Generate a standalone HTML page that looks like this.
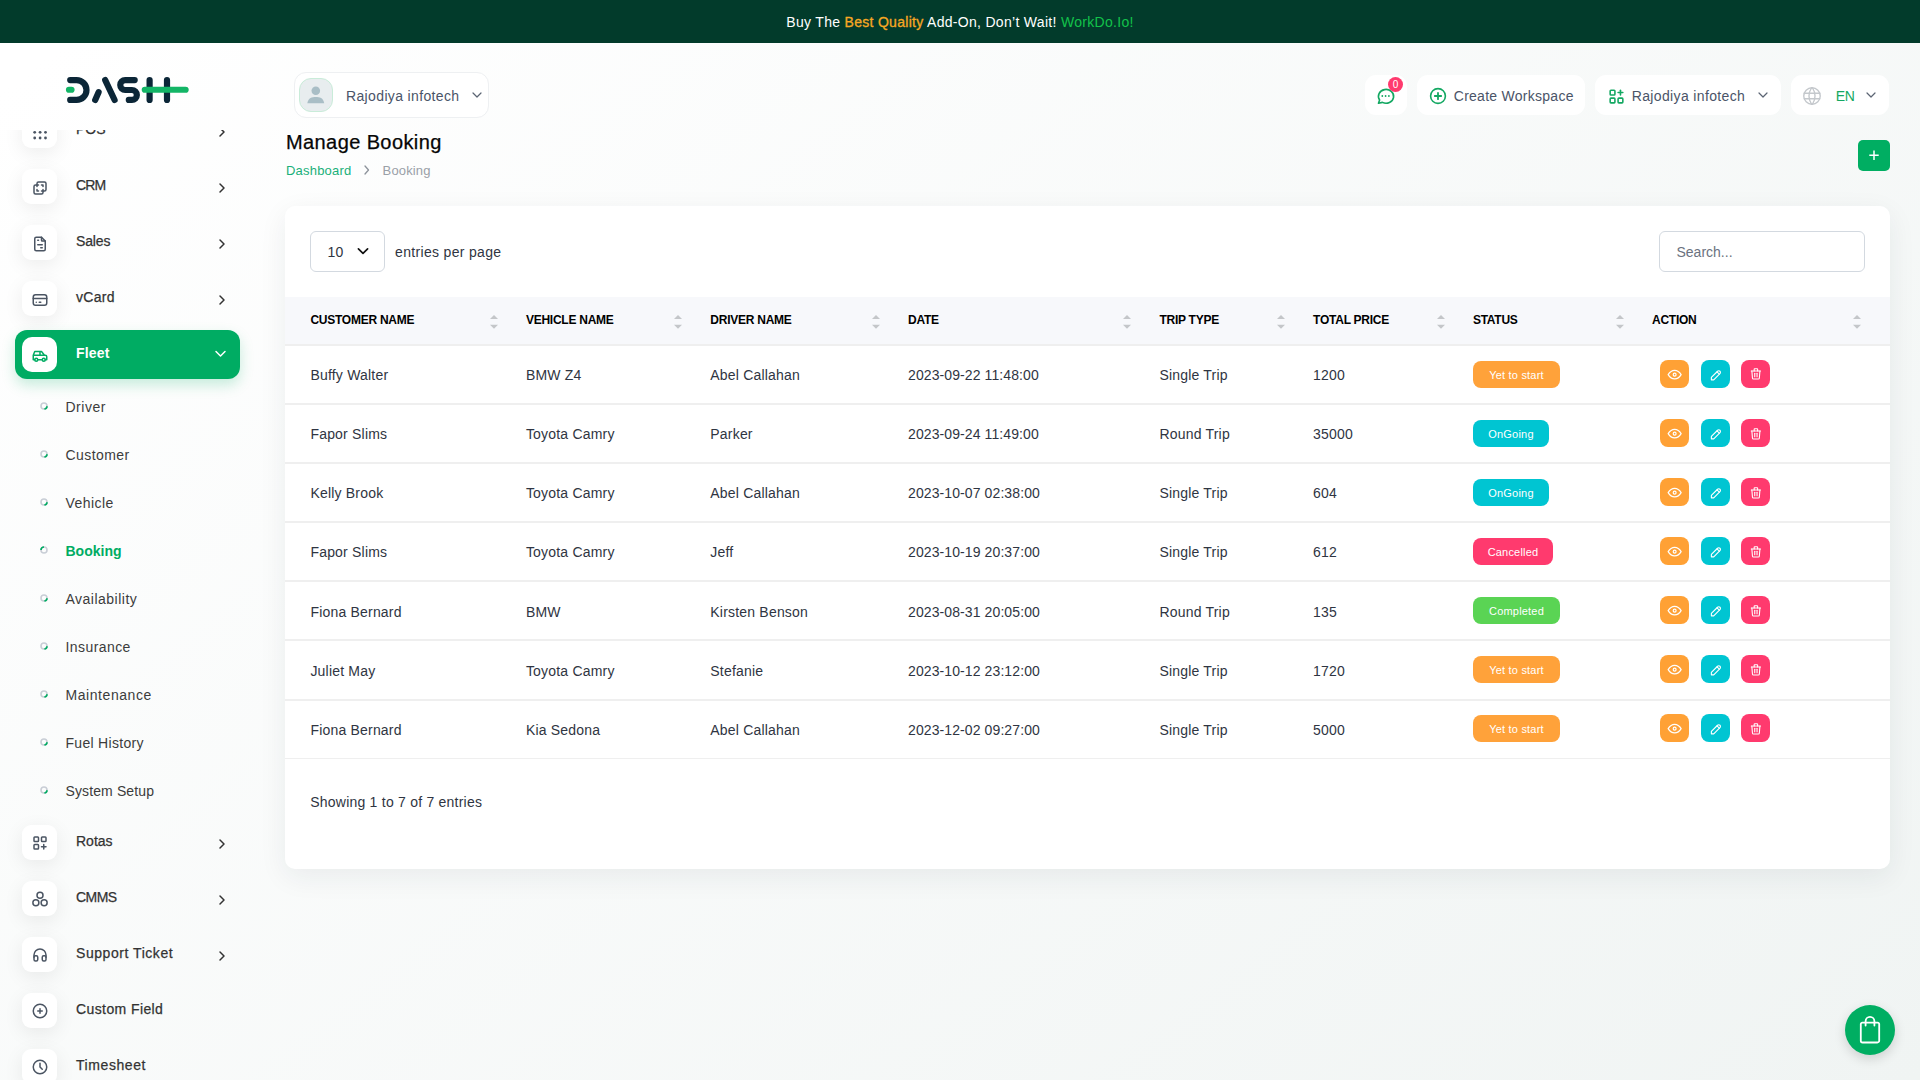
<!DOCTYPE html>
<html><head><meta charset="utf-8">
<style>
*{box-sizing:border-box;margin:0;padding:0}
html,body{width:1920px;height:1080px;overflow:hidden}
body{font-family:"Liberation Sans",sans-serif;position:relative;background:#fff linear-gradient(141.55deg,rgba(240,244,243,0) 3.46%,#f0f4f3 99.86%);color:#333}
.a{position:absolute;line-height:1;white-space:nowrap}
.ib{position:absolute;left:22px;width:35px;height:35px;border-radius:9px;background:#fff;box-shadow:0 5px 20px rgba(0,0,0,0.075)}
.ib svg{position:absolute;left:8.5px;top:9.5px}
.lbl{position:absolute;left:76px;font-size:14px;color:#333;-webkit-text-stroke:0.25px #333;line-height:1;white-space:nowrap}
.chev{position:absolute;left:217px}
.sub{position:absolute;left:65.5px;font-size:14px;color:#3c3c3c;letter-spacing:0.45px;line-height:1;white-space:nowrap}
.bul{position:absolute;left:40px;width:8px;height:8px}
.hbox{position:absolute;top:75px;height:40px;background:#fff;border-radius:11px}
.card{position:absolute;left:285px;top:206px;width:1605px;height:663px;background:#fff;border-radius:10px;box-shadow:0 8px 28px rgba(30,40,50,0.07)}
.th{position:absolute;top:313.8px;font-size:12px;font-weight:bold;color:#000;letter-spacing:-0.25px;line-height:1;white-space:nowrap}
.sort{position:absolute;top:315px}
.td{position:absolute;font-size:14px;color:#2f3542;letter-spacing:0.2px;line-height:1;white-space:nowrap}
.badge{position:absolute;left:1473px;height:27px;border-radius:8px;color:#fff;font-size:11px;letter-spacing:0.2px;line-height:28px;text-align:center;white-space:nowrap}
.btn{position:absolute;width:29px;height:28px;border-radius:8px}

.hr{position:absolute;left:285px;width:1605px;height:1.5px;background:#eceef1}
</style></head><body>
<div style="position:absolute;left:0;top:0;width:1920px;height:43px;background:#023b2b"></div>
<div class="a" style="left:0px;top:14.85px;font-size:14px;width:1920px;text-align:center;color:#fff;letter-spacing:0.3px">Buy The <span style="color:#f7a823;-webkit-text-stroke:0.3px #f7a823">Best Quality</span> Add-On, Don’t Wait! <span style="color:#13c24a">WorkDo.Io!</span></div>
<svg class="a" style="left:0;top:0" width="260" height="130" viewBox="0 0 260 130">
 <g fill="none" stroke-linecap="round" stroke-width="6.2">
  <path d="M69 89.75 H71.5" stroke="#13b566"/>
  <path d="M70.2 80.1 H76.6 A9.9 9.9 0 0 1 76.6 99.9 H70.2" stroke="#0b2637"/>
  <path d="M95.2 100 L98.6 92.2" stroke="#0b2637"/>
  <path d="M105.2 80.1 L114.6 100" stroke="#0b2637"/>
  <path d="M134.7 80.1 H125.2 A4.95 4.95 0 0 0 125.2 90 H131.9 A4.95 4.95 0 0 1 131.9 99.9 H128.8" stroke="#0b2637"/>
  <path d="M149.6 80.1 V99.9 M167 80.1 V99.9" stroke="#0b2637"/>
  <path d="M144.8 89.75 H185.6" stroke="#13b566"/>
 </g>
</svg>
<div style="position:absolute;left:0;top:130px;width:260px;height:950px;overflow:hidden"><div style="position:absolute;left:0;top:-130px;width:260px;height:1080px">
<div class="ib" style="top:113.2px"><svg width="18" height="18" viewBox="0 0 18 18" fill="#4b5563"><circle cx="3.7" cy="3.8" r="1.4"/><circle cx="9.1" cy="3.8" r="1.4"/><circle cx="14.5" cy="3.8" r="1.4"/><circle cx="3.7" cy="9.3" r="1.4"/><circle cx="9.1" cy="9.3" r="1.4"/><circle cx="14.5" cy="9.3" r="1.4"/><circle cx="3.7" cy="15" r="1.4"/><circle cx="9.1" cy="15" r="1.4"/><circle cx="14.5" cy="15" r="1.4"/></svg></div>
<div class="lbl" style="top:121.95px;letter-spacing:0px">POS</div>
<svg class="chev" style="top:125.9px" width="10" height="12" viewBox="0 0 10 12"><path d="M3 2 L7 6 L3 10" fill="none" stroke="#333" stroke-width="1.5" stroke-linecap="round" stroke-linejoin="round"/></svg>
<div class="ib" style="top:169.1px"><svg width="18" height="18" viewBox="0 0 24 24" fill="none" stroke="#4b5563" stroke-width="2" stroke-linecap="round" stroke-linejoin="round"><path d="M16 16v2a2 2 0 0 1 -2 2h-8a2 2 0 0 1 -2 -2v-8a2 2 0 0 1 2 -2h2v-2a2 2 0 0 1 2 -2h8a2 2 0 0 1 2 2v8a2 2 0 0 1 -2 2h-2"/><path d="M10 8l-2 0l0 2"/><path d="M8 14l0 2l2 0"/><path d="M14 8l2 0l0 2"/><path d="M16 14l0 2l-2 0"/></svg></div>
<div class="lbl" style="top:177.85px;letter-spacing:-0.9px">CRM</div>
<svg class="chev" style="top:181.8px" width="10" height="12" viewBox="0 0 10 12"><path d="M3 2 L7 6 L3 10" fill="none" stroke="#333" stroke-width="1.5" stroke-linecap="round" stroke-linejoin="round"/></svg>
<div class="ib" style="top:225.1px"><svg width="18" height="18" viewBox="0 0 24 24" fill="none" stroke="#4b5563" stroke-width="2" stroke-linecap="round" stroke-linejoin="round"><path d="M14 3v4a1 1 0 0 0 1 1h4"/><path d="M17 21h-10a2 2 0 0 1 -2 -2v-14a2 2 0 0 1 2 -2h7l5 5v11a2 2 0 0 1 -2 2z"/><path d="M9 7l1 0"/><path d="M9 13l6 0"/><path d="M13 17l2 0"/></svg></div>
<div class="lbl" style="top:233.85px;letter-spacing:-0.15px">Sales</div>
<svg class="chev" style="top:237.8px" width="10" height="12" viewBox="0 0 10 12"><path d="M3 2 L7 6 L3 10" fill="none" stroke="#333" stroke-width="1.5" stroke-linecap="round" stroke-linejoin="round"/></svg>
<div class="ib" style="top:281.1px"><svg width="18" height="18" viewBox="0 0 24 24" fill="none" stroke="#4b5563" stroke-width="2" stroke-linecap="round" stroke-linejoin="round"><path d="M3 8a3 3 0 0 1 3 -3h12a3 3 0 0 1 3 3v8a3 3 0 0 1 -3 3h-12a3 3 0 0 1 -3 -3z"/><path d="M3 10l18 0"/><path d="M7 15l.01 0"/><path d="M11 15l2 0"/></svg></div>
<div class="lbl" style="top:289.85px;letter-spacing:0.27px">vCard</div>
<svg class="chev" style="top:293.8px" width="10" height="12" viewBox="0 0 10 12"><path d="M3 2 L7 6 L3 10" fill="none" stroke="#333" stroke-width="1.5" stroke-linecap="round" stroke-linejoin="round"/></svg>
<div style="position:absolute;left:15px;top:330px;width:225px;height:48.5px;border-radius:12px;background:#00ac63;box-shadow:0 6px 14px rgba(0,172,99,0.22)"></div>
<div style="position:absolute;left:22px;top:337px;width:35px;height:35px;border-radius:10px;background:#fff"><svg style="position:absolute;left:8.5px;top:9.7px" width="18" height="18" viewBox="0 0 24 24" fill="none" stroke="#00ac63" stroke-width="2" stroke-linecap="round" stroke-linejoin="round"><path d="M5 17a2 2 0 1 0 4 0a2 2 0 1 0 -4 0"/><path d="M15 17a2 2 0 1 0 4 0a2 2 0 1 0 -4 0"/><path d="M5 17h-2v-6l2 -5h9l4 5h1a2 2 0 0 1 2 2v4h-2m-4 0h-6m-6 -6h15m-6 0v-5"/></svg></div>
<div class="lbl" style="top:345.95px;color:#fff;font-weight:bold;-webkit-text-stroke:0;letter-spacing:0.2px">Fleet</div>
<svg class="a" style="left:214px;top:348px" width="13" height="12" viewBox="0 0 13 12"><path d="M2 3.5 L6.5 8 L11 3.5" fill="none" stroke="#fff" stroke-width="1.5" stroke-linecap="round" stroke-linejoin="round"/></svg>
<svg class="bul" style="top:402.3px" width="8" height="8" viewBox="0 0 8 8"><circle cx="4" cy="4" r="3" fill="none" stroke="#c9ced6" stroke-width="1.6"/><path d="M7 4.2 A3 3 0 0 1 4.4 7" fill="none" stroke="#00ac63" stroke-width="1.7"/></svg>
<div class="sub" style="top:399.95px;letter-spacing:0.5px">Driver</div>
<svg class="bul" style="top:450.3px" width="8" height="8" viewBox="0 0 8 8"><circle cx="4" cy="4" r="3" fill="none" stroke="#c9ced6" stroke-width="1.6"/><path d="M7 4.2 A3 3 0 0 1 4.4 7" fill="none" stroke="#00ac63" stroke-width="1.7"/></svg>
<div class="sub" style="top:447.95px;letter-spacing:0.44px">Customer</div>
<svg class="bul" style="top:498.3px" width="8" height="8" viewBox="0 0 8 8"><circle cx="4" cy="4" r="3" fill="none" stroke="#c9ced6" stroke-width="1.6"/><path d="M7 4.2 A3 3 0 0 1 4.4 7" fill="none" stroke="#00ac63" stroke-width="1.7"/></svg>
<div class="sub" style="top:495.95px;letter-spacing:0.45px">Vehicle</div>
<svg class="bul" style="top:546.3px" width="8" height="8" viewBox="0 0 8 8"><circle cx="4" cy="4" r="3" fill="none" stroke="#c9ced6" stroke-width="1.6"/><path d="M1 4 A3 3 0 0 1 4 1" fill="none" stroke="#00ac63" stroke-width="1.7"/></svg>
<div class="sub" style="top:543.95px;color:#00ac63;font-weight:bold;letter-spacing:0px">Booking</div>
<svg class="bul" style="top:594.3px" width="8" height="8" viewBox="0 0 8 8"><circle cx="4" cy="4" r="3" fill="none" stroke="#c9ced6" stroke-width="1.6"/><path d="M7 4.2 A3 3 0 0 1 4.4 7" fill="none" stroke="#00ac63" stroke-width="1.7"/></svg>
<div class="sub" style="top:591.95px;letter-spacing:0.49px">Availability</div>
<svg class="bul" style="top:642.3px" width="8" height="8" viewBox="0 0 8 8"><circle cx="4" cy="4" r="3" fill="none" stroke="#c9ced6" stroke-width="1.6"/><path d="M7 4.2 A3 3 0 0 1 4.4 7" fill="none" stroke="#00ac63" stroke-width="1.7"/></svg>
<div class="sub" style="top:639.95px;letter-spacing:0.42px">Insurance</div>
<svg class="bul" style="top:690.3px" width="8" height="8" viewBox="0 0 8 8"><circle cx="4" cy="4" r="3" fill="none" stroke="#c9ced6" stroke-width="1.6"/><path d="M7 4.2 A3 3 0 0 1 4.4 7" fill="none" stroke="#00ac63" stroke-width="1.7"/></svg>
<div class="sub" style="top:687.95px;letter-spacing:0.56px">Maintenance</div>
<svg class="bul" style="top:738.3px" width="8" height="8" viewBox="0 0 8 8"><circle cx="4" cy="4" r="3" fill="none" stroke="#c9ced6" stroke-width="1.6"/><path d="M7 4.2 A3 3 0 0 1 4.4 7" fill="none" stroke="#00ac63" stroke-width="1.7"/></svg>
<div class="sub" style="top:735.95px;letter-spacing:0.3px">Fuel History</div>
<svg class="bul" style="top:786.3px" width="8" height="8" viewBox="0 0 8 8"><circle cx="4" cy="4" r="3" fill="none" stroke="#c9ced6" stroke-width="1.6"/><path d="M7 4.2 A3 3 0 0 1 4.4 7" fill="none" stroke="#00ac63" stroke-width="1.7"/></svg>
<div class="sub" style="top:783.95px;letter-spacing:0.12px">System Setup</div>
<div class="ib" style="top:824.9px"><svg width="18" height="18" viewBox="0 0 24 24" fill="none" stroke="#4b5563" stroke-width="2" stroke-linecap="round" stroke-linejoin="round"><path d="M4 5a1 1 0 0 1 1 -1h4a1 1 0 0 1 1 1v4a1 1 0 0 1 -1 1h-4a1 1 0 0 1 -1 -1z"/><path d="M14 5a1 1 0 0 1 1 -1h4a1 1 0 0 1 1 1v4a1 1 0 0 1 -1 1h-4a1 1 0 0 1 -1 -1z"/><path d="M4 15a1 1 0 0 1 1 -1h4a1 1 0 0 1 1 1v4a1 1 0 0 1 -1 1h-4a1 1 0 0 1 -1 -1z"/><path d="M14 17h6m-3 -3v6"/></svg></div>
<div class="lbl" style="top:833.65px;letter-spacing:0.0px">Rotas</div>
<svg class="chev" style="top:837.6px" width="10" height="12" viewBox="0 0 10 12"><path d="M3 2 L7 6 L3 10" fill="none" stroke="#333" stroke-width="1.5" stroke-linecap="round" stroke-linejoin="round"/></svg>
<div class="ib" style="top:880.9px"><svg width="18" height="18" viewBox="0 0 24 24" fill="none" stroke="#4b5563" stroke-width="2" stroke-linecap="round" stroke-linejoin="round"><circle cx="12" cy="7" r="4"/><circle cx="6.5" cy="17" r="4"/><circle cx="17.5" cy="17" r="4"/></svg></div>
<div class="lbl" style="top:889.65px;letter-spacing:-0.52px">CMMS</div>
<svg class="chev" style="top:893.6px" width="10" height="12" viewBox="0 0 10 12"><path d="M3 2 L7 6 L3 10" fill="none" stroke="#333" stroke-width="1.5" stroke-linecap="round" stroke-linejoin="round"/></svg>
<div class="ib" style="top:936.9px"><svg width="18" height="18" viewBox="0 0 24 24" fill="none" stroke="#4b5563" stroke-width="2" stroke-linecap="round" stroke-linejoin="round"><path d="M4 15a2 2 0 0 1 2 -2h1a2 2 0 0 1 2 2v3a2 2 0 0 1 -2 2h-1a2 2 0 0 1 -2 -2z"/><path d="M15 15a2 2 0 0 1 2 -2h1a2 2 0 0 1 2 2v3a2 2 0 0 1 -2 2h-1a2 2 0 0 1 -2 -2z"/><path d="M4 15v-3a8 8 0 0 1 16 0v3"/></svg></div>
<div class="lbl" style="top:945.65px;letter-spacing:0.55px">Support Ticket</div>
<svg class="chev" style="top:949.6px" width="10" height="12" viewBox="0 0 10 12"><path d="M3 2 L7 6 L3 10" fill="none" stroke="#333" stroke-width="1.5" stroke-linecap="round" stroke-linejoin="round"/></svg>
<div class="ib" style="top:992.9px"><svg width="18" height="18" viewBox="0 0 24 24" fill="none" stroke="#4b5563" stroke-width="2" stroke-linecap="round" stroke-linejoin="round"><path d="M3 12a9 9 0 1 0 18 0a9 9 0 0 0 -18 0"/><path d="M9 12h6"/><path d="M12 9v6"/></svg></div>
<div class="lbl" style="top:1001.65px;letter-spacing:0.4px">Custom Field</div>
<div class="ib" style="top:1048.9px"><svg width="18" height="18" viewBox="0 0 24 24" fill="none" stroke="#4b5563" stroke-width="2" stroke-linecap="round" stroke-linejoin="round"><path d="M3 12a9 9 0 1 0 18 0a9 9 0 0 0 -18 0"/><path d="M12 7v5l3 3"/></svg></div>
<div class="lbl" style="top:1057.65px;letter-spacing:0.58px">Timesheet</div>
</div></div>
<div class="hbox" style="left:294px;top:72px;width:195px;height:46px;border-radius:12px;border:1px solid #eef0f2"></div>
<div style="position:absolute;left:299px;top:78px;width:34px;height:34px;border-radius:12px;background:#e8edef;border:1px solid #c9ecd9"></div>
<svg class="a" style="left:299px;top:78px" width="34" height="34" viewBox="0 0 34 34" fill="#a9bec6"><circle cx="16.8" cy="12.8" r="4.3"/><path d="M8.3 25.3 C9.3 19.5 13 18.9 16.8 18.9 C20.6 18.9 24.3 19.5 25.2 25.3 Z"/></svg>
<div class="a" style="left:346px;top:89.05px;font-size:14px;color:#4a5468;letter-spacing:0.36px">Rajodiya infotech</div>
<svg class="a" style="left:471px;top:90px" width="12" height="10" viewBox="0 0 12 10"><path d="M2 3 L6 7 L10 3" fill="none" stroke="#5b6473" stroke-width="1.2" stroke-linecap="round" stroke-linejoin="round"/></svg>
<div class="hbox" style="left:1365px;width:42px"></div>
<svg class="a" style="left:1376px;top:86px" width="20" height="20" viewBox="0 0 20 20" fill="none" stroke="#13a862" stroke-width="1.6" stroke-linecap="round" stroke-linejoin="round"><path d="M2.5 17.3 L3.6 14 A7.6 6.9 0 1 1 6.4 16.4 Z"/></svg>
<svg class="a" style="left:1380px;top:93px" width="12" height="6" viewBox="0 0 12 6" fill="#13a862"><circle cx="2.3" cy="3" r="0.9"/><circle cx="5.6" cy="3" r="0.9"/><circle cx="8.9" cy="3" r="0.9"/></svg>
<div style="position:absolute;left:1388px;top:77.2px;width:15px;height:15px;border-radius:50%;background:#ff3a6e;color:#fff;font-size:10px;line-height:15px;text-align:center">0</div>
<div class="hbox" style="left:1417px;width:168px"></div>
<svg class="a" style="left:1429px;top:87px" width="18" height="18" viewBox="0 0 18 18" fill="none" stroke="#13a862" stroke-width="1.6" stroke-linecap="round"><circle cx="9" cy="9" r="7.4"/><path d="M9 5.8 V12.2 M5.8 9 H12.2" stroke-width="1.8"/></svg>
<div class="a" style="left:1453.75px;top:89.05px;font-size:14px;color:#4a5468;letter-spacing:0.27px">Create Workspace</div>
<div class="hbox" style="left:1595px;width:186px"></div>
<svg class="a" style="left:1606.5px;top:86.5px" width="19" height="19" viewBox="0 0 24 24" fill="none" stroke="#13a862" stroke-width="2" stroke-linecap="round" stroke-linejoin="round"><path d="M4 5a1 1 0 0 1 1 -1h4a1 1 0 0 1 1 1v4a1 1 0 0 1 -1 1h-4a1 1 0 0 1 -1 -1z"/><path d="M4 15a1 1 0 0 1 1 -1h4a1 1 0 0 1 1 1v4a1 1 0 0 1 -1 1h-4a1 1 0 0 1 -1 -1z"/><path d="M14 15a1 1 0 0 1 1 -1h4a1 1 0 0 1 1 1v4a1 1 0 0 1 -1 1h-4a1 1 0 0 1 -1 -1z"/><path d="M14 7l6 0"/><path d="M17 4l0 6"/></svg>
<div class="a" style="left:1631.7px;top:89.15px;font-size:14px;color:#4a5468;letter-spacing:0.36px">Rajodiya infotech</div>
<svg class="a" style="left:1757px;top:90px" width="12" height="10" viewBox="0 0 12 10"><path d="M2 3 L6 7 L10 3" fill="none" stroke="#5b6473" stroke-width="1.2" stroke-linecap="round" stroke-linejoin="round"/></svg>
<div class="hbox" style="left:1791px;width:98px"></div>
<svg class="a" style="left:1801px;top:84.5px" width="22" height="22" viewBox="0 0 24 24" fill="none" stroke="#c4c8cc" stroke-width="1.5" stroke-linecap="round" stroke-linejoin="round"><path d="M3 12a9 9 0 1 0 18 0a9 9 0 0 0 -18 0"/><path d="M3.6 9h16.8"/><path d="M3.6 15h16.8"/><path d="M11.5 3a17 17 0 0 0 0 18"/><path d="M12.5 3a17 17 0 0 1 0 18"/></svg>
<div class="a" style="left:1835.8px;top:89.15px;font-size:14px;color:#13a862;letter-spacing:-0.3px">EN</div>
<svg class="a" style="left:1865px;top:90px" width="12" height="10" viewBox="0 0 12 10"><path d="M2 3 L6 7 L10 3" fill="none" stroke="#5b6473" stroke-width="1.2" stroke-linecap="round" stroke-linejoin="round"/></svg>
<div class="a" style="left:286px;top:131.97px;font-size:20px;color:#060606;letter-spacing:0.4px;-webkit-text-stroke:0.25px #060606">Manage Booking</div>
<div class="a" style="left:286px;top:163.70px;font-size:13px;color:#19b07a;letter-spacing:0.2px">Dashboard</div>
<svg class="a" style="left:362px;top:164px" width="10" height="12" viewBox="0 0 10 12"><path d="M3 2 L6.5 6 L3 10" fill="none" stroke="#8d939b" stroke-width="1.3" stroke-linecap="round" stroke-linejoin="round"/></svg>
<div class="a" style="left:382.6px;top:163.70px;font-size:13px;color:#9aa0a8;letter-spacing:0.15px">Booking</div>
<div style="position:absolute;left:1858px;top:140px;width:32px;height:31px;border-radius:5px;background:#00ae62"></div><svg class="a" style="left:1858px;top:140px" width="32" height="31" viewBox="0 0 32 31"><path d="M16 10.6 V20 M11.3 15.3 H20.7" stroke="#fff" stroke-width="1.5"/></svg>
<div class="card"></div>
<div style="position:absolute;left:310px;top:231px;width:75px;height:41px;border:1px solid #d3d9e0;border-radius:6px;background:#fff"></div>
<div class="a" style="left:327.6px;top:245.15px;font-size:14px;color:#2f3542;letter-spacing:0.1px">10</div>
<svg class="a" style="left:356px;top:246px" width="14" height="11" viewBox="0 0 14 11"><path d="M2.4 2.8 L7 7.3 L11.6 2.8" fill="none" stroke="#111" stroke-width="1.7" stroke-linecap="round" stroke-linejoin="round"/></svg>
<div class="a" style="left:395.1px;top:245.15px;font-size:14px;color:#2f3542;letter-spacing:0.32px">entries per page</div>
<div style="position:absolute;left:1659px;top:231px;width:206px;height:41px;border:1px solid #d3d9e0;border-radius:6px;background:#fff"></div>
<div class="a" style="left:1676.5px;top:245.05px;font-size:14px;color:#6b7280;letter-spacing:0px">Search...</div>
<div style="position:absolute;left:285px;top:297px;width:1605px;height:47.5px;background:#f7f8fb"></div>
<div class="th" style="left:310.4px">CUSTOMER NAME</div>
<svg class="sort" style="left:490px" width="8" height="14" viewBox="0 0 8 14" fill="#c4c6c9"><path d="M0 4 L4 0 L8 4 Z M0 9.8 L8 9.8 L4 13.8 Z"/></svg>
<div class="th" style="left:525.9px">VEHICLE NAME</div>
<svg class="sort" style="left:674.2px" width="8" height="14" viewBox="0 0 8 14" fill="#c4c6c9"><path d="M0 4 L4 0 L8 4 Z M0 9.8 L8 9.8 L4 13.8 Z"/></svg>
<div class="th" style="left:710.3px">DRIVER NAME</div>
<svg class="sort" style="left:872px" width="8" height="14" viewBox="0 0 8 14" fill="#c4c6c9"><path d="M0 4 L4 0 L8 4 Z M0 9.8 L8 9.8 L4 13.8 Z"/></svg>
<div class="th" style="left:908px">DATE</div>
<svg class="sort" style="left:1123px" width="8" height="14" viewBox="0 0 8 14" fill="#c4c6c9"><path d="M0 4 L4 0 L8 4 Z M0 9.8 L8 9.8 L4 13.8 Z"/></svg>
<div class="th" style="left:1159.4px">TRIP TYPE</div>
<svg class="sort" style="left:1277px" width="8" height="14" viewBox="0 0 8 14" fill="#c4c6c9"><path d="M0 4 L4 0 L8 4 Z M0 9.8 L8 9.8 L4 13.8 Z"/></svg>
<div class="th" style="left:1313.1px">TOTAL PRICE</div>
<svg class="sort" style="left:1437px" width="8" height="14" viewBox="0 0 8 14" fill="#c4c6c9"><path d="M0 4 L4 0 L8 4 Z M0 9.8 L8 9.8 L4 13.8 Z"/></svg>
<div class="th" style="left:1472.9px">STATUS</div>
<svg class="sort" style="left:1616px" width="8" height="14" viewBox="0 0 8 14" fill="#c4c6c9"><path d="M0 4 L4 0 L8 4 Z M0 9.8 L8 9.8 L4 13.8 Z"/></svg>
<div class="th" style="left:1652px">ACTION</div>
<svg class="sort" style="left:1852.7px" width="8" height="14" viewBox="0 0 8 14" fill="#c4c6c9"><path d="M0 4 L4 0 L8 4 Z M0 9.8 L8 9.8 L4 13.8 Z"/></svg>
<div class="hr" style="top:343.75px;height:2.5px;background:#efefef"></div>
<div class="td" style="left:310.4px;top:368.19px;font-size:14px;">Buffy Walter</div>
<div class="td" style="left:525.9px;top:368.19px;font-size:14px;">BMW Z4</div>
<div class="td" style="left:710.3px;top:368.19px;font-size:14px;">Abel Callahan</div>
<div class="td" style="left:908px;top:368.19px;font-size:14px;letter-spacing:0.1px">2023-09-22 11:48:00</div>
<div class="td" style="left:1159.4px;top:368.19px;font-size:14px;">Single Trip</div>
<div class="td" style="left:1313.1px;top:368.19px;font-size:14px;">1200</div>
<div class="badge" style="top:360.94px;width:87px;background:#ffa23a">Yet to start</div>
<div class="btn" style="left:1660px;top:359.94px;background:#ffa135"><svg style="position:absolute;left:5.8px;top:5.85px" width="17.3" height="17.3" viewBox="0 0 24 24" fill="none" stroke="#fff" stroke-width="1.7" stroke-linecap="round" stroke-linejoin="round"><path d="M10 12a2 2 0 1 0 4 0a2 2 0 0 0 -4 0"/><path d="M21 12c-2.4 4 -5.4 6 -9 6c-3.6 0 -6.6 -2 -9 -6c2.4 -4 5.4 -6 9 -6c3.6 0 6.6 2 9 6"/></svg></div>
<div class="btn" style="left:1701px;top:359.94px;background:#00c5d2"><svg style="position:absolute;left:7.65px;top:7.6px" width="14.2" height="14.2" viewBox="0 0 24 24" fill="none" stroke="#fff" stroke-width="1.9" stroke-linecap="round" stroke-linejoin="round"><path d="M4 20h4l10.5 -10.5a2.828 2.828 0 1 0 -4 -4l-10.5 10.5v4"/><path d="M13.5 6.5l4 4"/></svg></div>
<div class="btn" style="left:1741px;top:359.94px;background:#ff3a6e"><svg style="position:absolute;left:7.85px;top:7.55px" width="13.8" height="13.8" viewBox="0 0 24 24" fill="none" stroke="#fff" stroke-width="1.9" stroke-linecap="round" stroke-linejoin="round"><path d="M4 7l16 0"/><path d="M10 11l0 6"/><path d="M14 11l0 6"/><path d="M5 7l1 12a2 2 0 0 0 2 2h8a2 2 0 0 0 2 -2l1 -12"/><path d="M9 7v-3a1 1 0 0 1 1 -1h4a1 1 0 0 1 1 1v3"/></svg></div>
<div class="hr" style="top:403.09px;height:2px;background:#efefef"></div>
<div class="td" style="left:310.4px;top:427.28px;font-size:14px;">Fapor Slims</div>
<div class="td" style="left:525.9px;top:427.28px;font-size:14px;">Toyota Camry</div>
<div class="td" style="left:710.3px;top:427.28px;font-size:14px;">Parker</div>
<div class="td" style="left:908px;top:427.28px;font-size:14px;letter-spacing:0.1px">2023-09-24 11:49:00</div>
<div class="td" style="left:1159.4px;top:427.28px;font-size:14px;">Round Trip</div>
<div class="td" style="left:1313.1px;top:427.28px;font-size:14px;">35000</div>
<div class="badge" style="top:420.03px;width:76px;background:#00c5d2">OnGoing</div>
<div class="btn" style="left:1660px;top:419.03px;background:#ffa135"><svg style="position:absolute;left:5.8px;top:5.85px" width="17.3" height="17.3" viewBox="0 0 24 24" fill="none" stroke="#fff" stroke-width="1.7" stroke-linecap="round" stroke-linejoin="round"><path d="M10 12a2 2 0 1 0 4 0a2 2 0 0 0 -4 0"/><path d="M21 12c-2.4 4 -5.4 6 -9 6c-3.6 0 -6.6 -2 -9 -6c2.4 -4 5.4 -6 9 -6c3.6 0 6.6 2 9 6"/></svg></div>
<div class="btn" style="left:1701px;top:419.03px;background:#00c5d2"><svg style="position:absolute;left:7.65px;top:7.6px" width="14.2" height="14.2" viewBox="0 0 24 24" fill="none" stroke="#fff" stroke-width="1.9" stroke-linecap="round" stroke-linejoin="round"><path d="M4 20h4l10.5 -10.5a2.828 2.828 0 1 0 -4 -4l-10.5 10.5v4"/><path d="M13.5 6.5l4 4"/></svg></div>
<div class="btn" style="left:1741px;top:419.03px;background:#ff3a6e"><svg style="position:absolute;left:7.85px;top:7.55px" width="13.8" height="13.8" viewBox="0 0 24 24" fill="none" stroke="#fff" stroke-width="1.9" stroke-linecap="round" stroke-linejoin="round"><path d="M4 7l16 0"/><path d="M10 11l0 6"/><path d="M14 11l0 6"/><path d="M5 7l1 12a2 2 0 0 0 2 2h8a2 2 0 0 0 2 -2l1 -12"/><path d="M9 7v-3a1 1 0 0 1 1 -1h4a1 1 0 0 1 1 1v3"/></svg></div>
<div class="hr" style="top:462.18px;height:2px;background:#efefef"></div>
<div class="td" style="left:310.4px;top:486.37px;font-size:14px;">Kelly Brook</div>
<div class="td" style="left:525.9px;top:486.37px;font-size:14px;">Toyota Camry</div>
<div class="td" style="left:710.3px;top:486.37px;font-size:14px;">Abel Callahan</div>
<div class="td" style="left:908px;top:486.37px;font-size:14px;letter-spacing:0.1px">2023-10-07 02:38:00</div>
<div class="td" style="left:1159.4px;top:486.37px;font-size:14px;">Single Trip</div>
<div class="td" style="left:1313.1px;top:486.37px;font-size:14px;">604</div>
<div class="badge" style="top:479.12px;width:76px;background:#00c5d2">OnGoing</div>
<div class="btn" style="left:1660px;top:478.12px;background:#ffa135"><svg style="position:absolute;left:5.8px;top:5.85px" width="17.3" height="17.3" viewBox="0 0 24 24" fill="none" stroke="#fff" stroke-width="1.7" stroke-linecap="round" stroke-linejoin="round"><path d="M10 12a2 2 0 1 0 4 0a2 2 0 0 0 -4 0"/><path d="M21 12c-2.4 4 -5.4 6 -9 6c-3.6 0 -6.6 -2 -9 -6c2.4 -4 5.4 -6 9 -6c3.6 0 6.6 2 9 6"/></svg></div>
<div class="btn" style="left:1701px;top:478.12px;background:#00c5d2"><svg style="position:absolute;left:7.65px;top:7.6px" width="14.2" height="14.2" viewBox="0 0 24 24" fill="none" stroke="#fff" stroke-width="1.9" stroke-linecap="round" stroke-linejoin="round"><path d="M4 20h4l10.5 -10.5a2.828 2.828 0 1 0 -4 -4l-10.5 10.5v4"/><path d="M13.5 6.5l4 4"/></svg></div>
<div class="btn" style="left:1741px;top:478.12px;background:#ff3a6e"><svg style="position:absolute;left:7.85px;top:7.55px" width="13.8" height="13.8" viewBox="0 0 24 24" fill="none" stroke="#fff" stroke-width="1.9" stroke-linecap="round" stroke-linejoin="round"><path d="M4 7l16 0"/><path d="M10 11l0 6"/><path d="M14 11l0 6"/><path d="M5 7l1 12a2 2 0 0 0 2 2h8a2 2 0 0 0 2 -2l1 -12"/><path d="M9 7v-3a1 1 0 0 1 1 -1h4a1 1 0 0 1 1 1v3"/></svg></div>
<div class="hr" style="top:521.27px;height:2px;background:#efefef"></div>
<div class="td" style="left:310.4px;top:545.46px;font-size:14px;">Fapor Slims</div>
<div class="td" style="left:525.9px;top:545.46px;font-size:14px;">Toyota Camry</div>
<div class="td" style="left:710.3px;top:545.46px;font-size:14px;">Jeff</div>
<div class="td" style="left:908px;top:545.46px;font-size:14px;letter-spacing:0.1px">2023-10-19 20:37:00</div>
<div class="td" style="left:1159.4px;top:545.46px;font-size:14px;">Single Trip</div>
<div class="td" style="left:1313.1px;top:545.46px;font-size:14px;">612</div>
<div class="badge" style="top:538.22px;width:80px;background:#ff3a6e">Cancelled</div>
<div class="btn" style="left:1660px;top:537.22px;background:#ffa135"><svg style="position:absolute;left:5.8px;top:5.85px" width="17.3" height="17.3" viewBox="0 0 24 24" fill="none" stroke="#fff" stroke-width="1.7" stroke-linecap="round" stroke-linejoin="round"><path d="M10 12a2 2 0 1 0 4 0a2 2 0 0 0 -4 0"/><path d="M21 12c-2.4 4 -5.4 6 -9 6c-3.6 0 -6.6 -2 -9 -6c2.4 -4 5.4 -6 9 -6c3.6 0 6.6 2 9 6"/></svg></div>
<div class="btn" style="left:1701px;top:537.22px;background:#00c5d2"><svg style="position:absolute;left:7.65px;top:7.6px" width="14.2" height="14.2" viewBox="0 0 24 24" fill="none" stroke="#fff" stroke-width="1.9" stroke-linecap="round" stroke-linejoin="round"><path d="M4 20h4l10.5 -10.5a2.828 2.828 0 1 0 -4 -4l-10.5 10.5v4"/><path d="M13.5 6.5l4 4"/></svg></div>
<div class="btn" style="left:1741px;top:537.22px;background:#ff3a6e"><svg style="position:absolute;left:7.85px;top:7.55px" width="13.8" height="13.8" viewBox="0 0 24 24" fill="none" stroke="#fff" stroke-width="1.9" stroke-linecap="round" stroke-linejoin="round"><path d="M4 7l16 0"/><path d="M10 11l0 6"/><path d="M14 11l0 6"/><path d="M5 7l1 12a2 2 0 0 0 2 2h8a2 2 0 0 0 2 -2l1 -12"/><path d="M9 7v-3a1 1 0 0 1 1 -1h4a1 1 0 0 1 1 1v3"/></svg></div>
<div class="hr" style="top:580.36px;height:2px;background:#efefef"></div>
<div class="td" style="left:310.4px;top:604.55px;font-size:14px;">Fiona Bernard</div>
<div class="td" style="left:525.9px;top:604.55px;font-size:14px;">BMW</div>
<div class="td" style="left:710.3px;top:604.55px;font-size:14px;">Kirsten Benson</div>
<div class="td" style="left:908px;top:604.55px;font-size:14px;letter-spacing:0.1px">2023-08-31 20:05:00</div>
<div class="td" style="left:1159.4px;top:604.55px;font-size:14px;">Round Trip</div>
<div class="td" style="left:1313.1px;top:604.55px;font-size:14px;">135</div>
<div class="badge" style="top:597.30px;width:87px;background:#5ad454">Completed</div>
<div class="btn" style="left:1660px;top:596.30px;background:#ffa135"><svg style="position:absolute;left:5.8px;top:5.85px" width="17.3" height="17.3" viewBox="0 0 24 24" fill="none" stroke="#fff" stroke-width="1.7" stroke-linecap="round" stroke-linejoin="round"><path d="M10 12a2 2 0 1 0 4 0a2 2 0 0 0 -4 0"/><path d="M21 12c-2.4 4 -5.4 6 -9 6c-3.6 0 -6.6 -2 -9 -6c2.4 -4 5.4 -6 9 -6c3.6 0 6.6 2 9 6"/></svg></div>
<div class="btn" style="left:1701px;top:596.30px;background:#00c5d2"><svg style="position:absolute;left:7.65px;top:7.6px" width="14.2" height="14.2" viewBox="0 0 24 24" fill="none" stroke="#fff" stroke-width="1.9" stroke-linecap="round" stroke-linejoin="round"><path d="M4 20h4l10.5 -10.5a2.828 2.828 0 1 0 -4 -4l-10.5 10.5v4"/><path d="M13.5 6.5l4 4"/></svg></div>
<div class="btn" style="left:1741px;top:596.30px;background:#ff3a6e"><svg style="position:absolute;left:7.85px;top:7.55px" width="13.8" height="13.8" viewBox="0 0 24 24" fill="none" stroke="#fff" stroke-width="1.9" stroke-linecap="round" stroke-linejoin="round"><path d="M4 7l16 0"/><path d="M10 11l0 6"/><path d="M14 11l0 6"/><path d="M5 7l1 12a2 2 0 0 0 2 2h8a2 2 0 0 0 2 -2l1 -12"/><path d="M9 7v-3a1 1 0 0 1 1 -1h4a1 1 0 0 1 1 1v3"/></svg></div>
<div class="hr" style="top:639.45px;height:2px;background:#efefef"></div>
<div class="td" style="left:310.4px;top:663.64px;font-size:14px;">Juliet May</div>
<div class="td" style="left:525.9px;top:663.64px;font-size:14px;">Toyota Camry</div>
<div class="td" style="left:710.3px;top:663.64px;font-size:14px;">Stefanie</div>
<div class="td" style="left:908px;top:663.64px;font-size:14px;letter-spacing:0.1px">2023-10-12 23:12:00</div>
<div class="td" style="left:1159.4px;top:663.64px;font-size:14px;">Single Trip</div>
<div class="td" style="left:1313.1px;top:663.64px;font-size:14px;">1720</div>
<div class="badge" style="top:656.39px;width:87px;background:#ffa23a">Yet to start</div>
<div class="btn" style="left:1660px;top:655.39px;background:#ffa135"><svg style="position:absolute;left:5.8px;top:5.85px" width="17.3" height="17.3" viewBox="0 0 24 24" fill="none" stroke="#fff" stroke-width="1.7" stroke-linecap="round" stroke-linejoin="round"><path d="M10 12a2 2 0 1 0 4 0a2 2 0 0 0 -4 0"/><path d="M21 12c-2.4 4 -5.4 6 -9 6c-3.6 0 -6.6 -2 -9 -6c2.4 -4 5.4 -6 9 -6c3.6 0 6.6 2 9 6"/></svg></div>
<div class="btn" style="left:1701px;top:655.39px;background:#00c5d2"><svg style="position:absolute;left:7.65px;top:7.6px" width="14.2" height="14.2" viewBox="0 0 24 24" fill="none" stroke="#fff" stroke-width="1.9" stroke-linecap="round" stroke-linejoin="round"><path d="M4 20h4l10.5 -10.5a2.828 2.828 0 1 0 -4 -4l-10.5 10.5v4"/><path d="M13.5 6.5l4 4"/></svg></div>
<div class="btn" style="left:1741px;top:655.39px;background:#ff3a6e"><svg style="position:absolute;left:7.85px;top:7.55px" width="13.8" height="13.8" viewBox="0 0 24 24" fill="none" stroke="#fff" stroke-width="1.9" stroke-linecap="round" stroke-linejoin="round"><path d="M4 7l16 0"/><path d="M10 11l0 6"/><path d="M14 11l0 6"/><path d="M5 7l1 12a2 2 0 0 0 2 2h8a2 2 0 0 0 2 -2l1 -12"/><path d="M9 7v-3a1 1 0 0 1 1 -1h4a1 1 0 0 1 1 1v3"/></svg></div>
<div class="hr" style="top:698.54px;height:2px;background:#efefef"></div>
<div class="td" style="left:310.4px;top:722.73px;font-size:14px;">Fiona Bernard</div>
<div class="td" style="left:525.9px;top:722.73px;font-size:14px;">Kia Sedona</div>
<div class="td" style="left:710.3px;top:722.73px;font-size:14px;">Abel Callahan</div>
<div class="td" style="left:908px;top:722.73px;font-size:14px;letter-spacing:0.1px">2023-12-02 09:27:00</div>
<div class="td" style="left:1159.4px;top:722.73px;font-size:14px;">Single Trip</div>
<div class="td" style="left:1313.1px;top:722.73px;font-size:14px;">5000</div>
<div class="badge" style="top:715.49px;width:87px;background:#ffa23a">Yet to start</div>
<div class="btn" style="left:1660px;top:714.49px;background:#ffa135"><svg style="position:absolute;left:5.8px;top:5.85px" width="17.3" height="17.3" viewBox="0 0 24 24" fill="none" stroke="#fff" stroke-width="1.7" stroke-linecap="round" stroke-linejoin="round"><path d="M10 12a2 2 0 1 0 4 0a2 2 0 0 0 -4 0"/><path d="M21 12c-2.4 4 -5.4 6 -9 6c-3.6 0 -6.6 -2 -9 -6c2.4 -4 5.4 -6 9 -6c3.6 0 6.6 2 9 6"/></svg></div>
<div class="btn" style="left:1701px;top:714.49px;background:#00c5d2"><svg style="position:absolute;left:7.65px;top:7.6px" width="14.2" height="14.2" viewBox="0 0 24 24" fill="none" stroke="#fff" stroke-width="1.9" stroke-linecap="round" stroke-linejoin="round"><path d="M4 20h4l10.5 -10.5a2.828 2.828 0 1 0 -4 -4l-10.5 10.5v4"/><path d="M13.5 6.5l4 4"/></svg></div>
<div class="btn" style="left:1741px;top:714.49px;background:#ff3a6e"><svg style="position:absolute;left:7.85px;top:7.55px" width="13.8" height="13.8" viewBox="0 0 24 24" fill="none" stroke="#fff" stroke-width="1.9" stroke-linecap="round" stroke-linejoin="round"><path d="M4 7l16 0"/><path d="M10 11l0 6"/><path d="M14 11l0 6"/><path d="M5 7l1 12a2 2 0 0 0 2 2h8a2 2 0 0 0 2 -2l1 -12"/><path d="M9 7v-3a1 1 0 0 1 1 -1h4a1 1 0 0 1 1 1v3"/></svg></div>
<div class="hr" style="top:757.88px;height:1.5px;background:#efefef"></div>
<div class="a" style="left:310.2px;top:795.15px;font-size:14px;color:#2f3542;letter-spacing:0.23px">Showing 1 to 7 of 7 entries</div>
<div style="position:absolute;left:1845px;top:1005px;width:50px;height:50px;border-radius:50%;background:#00ae62;box-shadow:0 4px 12px rgba(0,0,0,0.15)"></div>
<svg class="a" style="left:1858px;top:1015px" width="24" height="30" viewBox="0 0 24 30" fill="none" stroke="#fff" stroke-width="1.8" stroke-linecap="round" stroke-linejoin="round"><path d="M4.3 7.6 H19.7 A1.5 1.5 0 0 1 21.2 9.1 V25.7 A1.8 1.8 0 0 1 19.4 27.5 H4.6 A1.8 1.8 0 0 1 2.8 25.7 V9.1 A1.5 1.5 0 0 1 4.3 7.6 Z"/><path d="M7.6 10.5 V6.3 A4.4 4.4 0 0 1 16.4 6.3 V10.5"/></svg>
</body></html>
